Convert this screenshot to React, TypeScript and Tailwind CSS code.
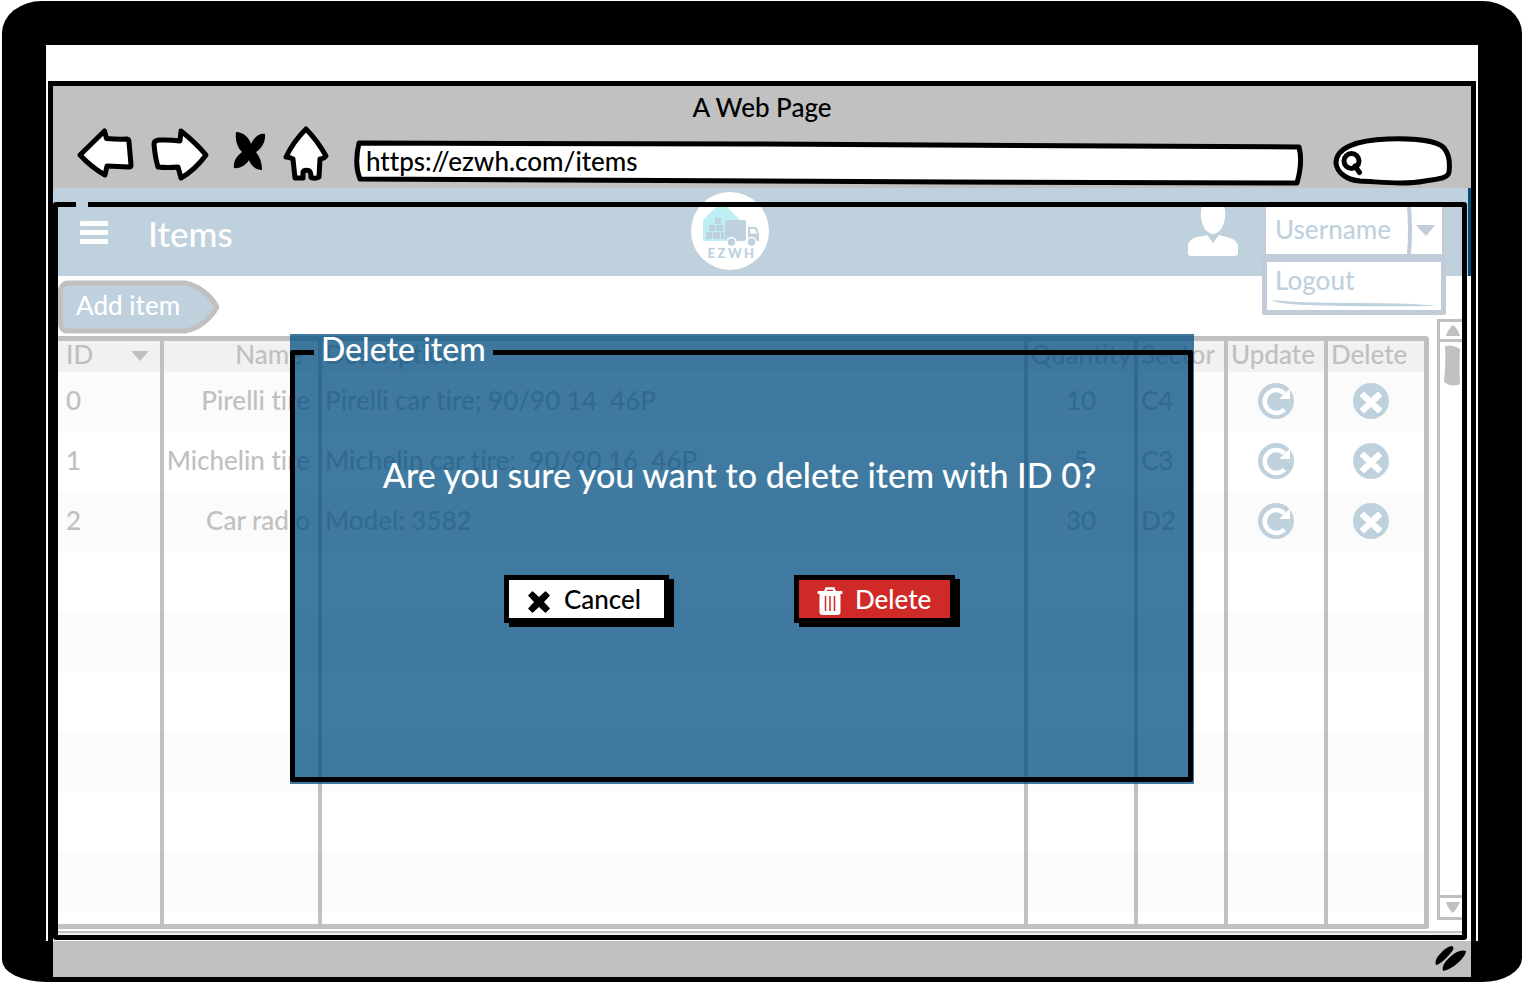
import React from "react";

type Item = {
  id: number;
  name: string;
  description: string;
  quantity: number;
  sector: string;
};

const items: Item[] = [
  { id: 0, name: "Pirelli tire", description: "Pirelli car tire; 90/90 14  46P", quantity: 10, sector: "C4" },
  { id: 1, name: "Michelin tire", description: "Michelin car tire;  90/90 16  46P", quantity: 5, sector: "C3" },
  { id: 2, name: "Car radio", description: "Model: 3582", quantity: 30, sector: "D2" },
];

const emptyRows = [3, 4, 5, 6, 7, 8];

const navStroke = {
  fill: "#fff",
  stroke: "#000",
  strokeWidth: 5,
  strokeLinejoin: "round" as const,
  strokeLinecap: "round" as const,
};

function Toolbar() {
  return (
    <div className="flex h-[60px] items-end gap-[14px] pb-[2px] pl-[23px] pr-[18px]">
      <button aria-label="Back" className="shrink-0">
        <svg width="60" height="58" viewBox="76 128 60 58" className="block overflow-visible">
          <path d="M80 155 L104.500 131 L106.500 138.500 Q118 139.500 127 139 Q129 139.500 129 142 L131 165 Q131 167 129 167 L107 166 L105 175 Q91 167 80 155 Z" {...navStroke} />
        </svg>
      </button>
      <button aria-label="Forward" className="shrink-0">
        <svg width="61" height="58" viewBox="150 128 61 58" className="block overflow-visible">
          <path d="M154 144 Q154 140.500 159 140 Q170 139.500 180 141 L181 131 Q196 143 206 155 Q195 170 181 178 L178 167 Q168 168 158 167 Q155 157 154 144 Z" {...navStroke} />
        </svg>
      </button>
      <button aria-label="Stop" className="shrink-0">
        <svg width="43" height="58" viewBox="225 128 43 58" className="block overflow-visible">
          <path d="M236 132 C243 132 249 137 251 144 C254 137 260 133 265 134 C266 141 262 148 256 152 C260 157 262 163 262 170 C256 170 251 166 249 160 C246 165 240 169 234 168 C233 161 237 156 242 152 C237 147 235 140 236 132 Z" />
        </svg>
      </button>
      <button aria-label="Home" className="shrink-0">
        <svg width="48" height="58" viewBox="282 128 48 58" className="block overflow-visible">
          <path d="M306 129 Q317 140 326 156 Q323 159 320 159 L319 177 Q316 179 311 177.500 Q311 171 308.500 170.500 Q304 169.500 303 172 L303 178 L295 178 Q294 169 293 159 Q289 157 286 157 Q293 142 306 129 Z" {...navStroke} />
        </svg>
      </button>
      <div className="relative ml-[9px] h-[46px] min-w-0 flex-1">
        <svg viewBox="0 0 951 46" preserveAspectRatio="none" className="absolute inset-0 h-full w-full" aria-hidden="true">
          <path d="M6 3 L400 4 L946 7 Q950 22 944 43 L600 42 L7 39 Q1 24 6 3 Z" {...navStroke} vectorEffect="non-scaling-stroke" />
        </svg>
        <input
          aria-label="Address"
          defaultValue="https://ezwh.com/items"
          className="relative block h-[42px] w-full bg-transparent px-[13px] text-[26px] leading-[42px] text-black outline-none"
        />
      </div>
      <div className="relative ml-[14px] h-[50px] w-[121px] shrink-0">
        <svg viewBox="1332 137 121 50" className="absolute inset-0 h-full w-full" aria-hidden="true">
          <path d="M1336 164 C1336 149 1356 141 1388 140 C1416 139 1438 142 1444 149 C1449 155 1450 165 1449 173 C1448 180 1436 180 1425 182 C1404 186 1382 183 1360 182 C1347 181 1337 174 1336 164 Z" {...navStroke} />
          <circle cx="1351.500" cy="162" r="7.500" fill="none" stroke="#000" strokeWidth="5" />
          <path d="M1355 167 L1359.500 173.500" stroke="#000" strokeWidth="5" strokeLinecap="round" />
        </svg>
        <input aria-label="Search" className="relative block h-full w-full bg-transparent pl-[34px] pr-3 text-[20px] outline-none" />
      </div>
    </div>
  );
}

function Logo() {
  return (
    <svg width="78" height="78" viewBox="691 191 78 78" className="mb-[2px] ml-px block" role="img" aria-label="EZWH">
      <circle cx="730" cy="230" r="39" fill="#fff" />
      <path d="M703 240 V219 L719 203 H724 L741 220 V240 Z" fill="#bdeef3" />
      <g fill="#c0d1de">
        <rect x="715" y="217" width="6" height="6" />
        <rect x="709" y="224" width="6" height="6" />
        <rect x="716" y="224" width="7" height="6" rx="1" />
        <rect x="706" y="231" width="6" height="7" />
        <rect x="713" y="231" width="7" height="7" rx="1" />
        <rect x="721" y="231" width="3" height="7" />
        <rect x="725" y="219" width="21" height="21" rx="2" />
        <path d="M748 226 H755 Q757 226 757.500 228 L759 233 V240 H748 Z" />
      </g>
      <path d="M750 228 H755 L757 232.500 H750 Z" fill="#fff" />
      <circle cx="731.500" cy="241" r="4.500" fill="#c0d1de" stroke="#fff" strokeWidth="1.500" />
      <circle cx="751.500" cy="241" r="4.500" fill="#c0d1de" stroke="#fff" strokeWidth="1.500" />
      <text x="707.500 717.500 728 744" y="257" fontSize="13" fontWeight="900" fontFamily="Lato, sans-serif" fill="#c0d1de">
        EZWH
      </text>
    </svg>
  );
}

function Header() {
  return (
    <header className="grid h-[88px] grid-cols-[45%_78px_1fr] items-center border-r-[3px] border-[#004d80] bg-[#c0d1de]">
      <div className="flex items-center gap-[40px] pl-[27px] pt-[2px]">
        <button aria-label="Menu">
          <svg width="28" height="24" viewBox="0 0 28 24" fill="#fff" className="block">
            <rect width="28" height="5" rx="1" />
            <rect y="9" width="28" height="5" rx="1" />
            <rect y="18" width="28" height="5" rx="1" />
          </svg>
        </button>
        <h1 className="text-[35px] leading-[40px] text-white">Items</h1>
      </div>
      <Logo />
      <div className="flex items-center justify-end gap-[25px] pb-[2px] pr-[23px]">
        <svg width="50" height="54" viewBox="1188 204 50 54" fill="#fff" className="block" aria-hidden="true">
          <path d="M1201 210 Q1203 202 1213 202 Q1223 202 1225 210 Q1226 222 1221 229 Q1217 234 1213 234 Q1209 234 1205 229 Q1200 222 1201 210 Z" />
          <path d="M1188 253 V244 Q1190 239 1197 237 Q1204 236 1207 235 L1213 243 L1219 235 Q1223 236 1230 238 Q1236 240 1238 245 V253 Q1238 256 1235 256 H1191 Q1188 256 1188 253 Z" />
        </svg>
        <div className="relative w-[182px]">
          <div className="relative h-[54px] border-[3px] border-b-4 border-[#c2ccd9] bg-white">
            <select
              aria-label="Account"
              className="block h-full w-full appearance-none bg-transparent pl-[9px] pb-[2px] text-[26px] text-[#c0d1de] outline-none"
            >
              <option>Username</option>
            </select>
            <svg viewBox="0 0 40 47" className="pointer-events-none absolute right-0 top-0 h-full w-[40px]" aria-hidden="true">
              <path d="M7 0 Q9 24 7 47" fill="none" stroke="#c2ccd9" strokeWidth="4" />
              <path d="M14 18 H33 L24 29 Z" fill="#c0ccd9" />
            </svg>
          </div>
          <div className="absolute -left-px top-[53px] h-[58px] w-[184px] rounded-[2px] border-[5px] border-[#c2ccd9] bg-white">
            <a href="#logout" className="block pl-[8px] text-[26px] leading-[37px] text-[#c0d1de]">
              Logout
            </a>
            <svg viewBox="0 0 174 8" preserveAspectRatio="none" className="block h-[8px] w-full" aria-hidden="true">
              <path d="M5 1 Q30 4 90 4 Q150 4 169 7 Q90 8 40 6 Q10 5 5 1 Z" fill="#c0d1de" />
            </svg>
          </div>
        </div>
      </div>
    </header>
  );
}

function UpdateIcon() {
  return (
    <svg width="36" height="36" viewBox="0 0 36 36" className="block" aria-hidden="true">
      <circle cx="18" cy="18" r="18" fill="#c0d1de" />
      <path d="M26.500 26.500 A11.500 11.500 0 1 1 26.500 10.500" fill="none" stroke="#fff" strokeWidth="4.500" />
      <path d="M32 5.500 V16 H21 Z" fill="#fff" />
    </svg>
  );
}

function CrossIcon() {
  return (
    <svg width="36" height="36" viewBox="0 0 36 36" className="block" aria-hidden="true">
      <circle cx="18" cy="18" r="18" fill="#c0d1de" />
      <path
        d="M11 9 L18 15.500 L25 9 L29 13 L22 19.500 L29 26 L25 30 L18 23.500 L11 30 L7 26 L14 19.500 L7 13 Z"
        fill="#fff"
        stroke="#fff"
        strokeLinejoin="round"
      />
    </svg>
  );
}

function ItemsTable() {
  const line = "border-r-4 border-[#c0c0c0] p-0";
  return (
    <table className="w-full table-fixed border-separate border-spacing-0 rounded-r-[4px] border-y-[5px] border-r-[5px] border-[#c0c0c0] text-[26px] leading-[30px] text-[#c0c0c0]">
      <colgroup>
        <col className="w-[107px]" />
        <col className="w-[158px]" />
        <col />
        <col className="w-[110px]" />
        <col className="w-[90px]" />
        <col className="w-[100px]" />
        <col className="w-[96px]" />
      </colgroup>
      <thead className="bg-[#f1f1f1] text-left">
        <tr className="h-[31px]">
          <th className={line + " font-medium"}>
            <button className="flex h-[31px] w-full items-start justify-between pl-[9px] pr-[11px] leading-[26px]">
              ID
              <svg width="18" height="10" viewBox="0 0 18 10" className="mt-[10px] block" aria-hidden="true">
                <path d="M0 0 H18 L9 10 Z" fill="#c0c0c0" />
              </svg>
            </button>
          </th>
          <th className={line + " font-medium"}>
            <div className="h-[31px] pr-[15px] text-right leading-[26px]">Name</div>
          </th>
          <th className={line + " font-medium"}>
            <div className="h-[31px] pl-[3px] leading-[26px]">Description</div>
          </th>
          <th className={line + " font-medium"}>
            <div className="h-[31px] text-center leading-[26px]">Quantity</div>
          </th>
          <th className={line + " font-medium"}>
            <div className="h-[31px] pl-[3px] leading-[26px]">Sector</div>
          </th>
          <th className={line + " font-medium"}>
            <div className="h-[31px] pl-[3px] leading-[26px]">Update</div>
          </th>
          <th className="p-0 font-medium">
            <div className="h-[31px] pl-[3px] leading-[26px]">Delete</div>
          </th>
        </tr>
      </thead>
      <tbody>
        {items.map((item) => (
          <tr key={item.id} className="h-[60px] odd:bg-[#fbfbfb]">
            <td className={line}>
              <div className="pb-1 pl-[9px]">{item.id}</div>
            </td>
            <td className={line}>
              <div className="whitespace-nowrap pb-1 pr-[8px] text-right">{item.name}</div>
            </td>
            <td className={line}>
              <div className="whitespace-pre pb-1 pl-[3px]">{item.description}</div>
            </td>
            <td className={line}>
              <div className="pb-1 text-center">{item.quantity}</div>
            </td>
            <td className={line}>
              <div className="pb-1 pl-[3px]">{item.sector}</div>
            </td>
            <td className={line}>
              <button aria-label={"Update item " + item.id} className="mx-auto mb-[2px] block">
                <UpdateIcon />
              </button>
            </td>
            <td className="p-0">
              <button aria-label={"Delete item " + item.id} className="mb-[2px] ml-[25px] block">
                <CrossIcon />
              </button>
            </td>
          </tr>
        ))}
        {emptyRows.map((n) => (
          <tr key={n} className="h-[60px] odd:bg-[#fbfbfb]">
            <td className={line} />
            <td className={line} />
            <td className={line} />
            <td className={line} />
            <td className={line} />
            <td className={line} />
            <td className="p-0" />
          </tr>
        ))}
        <tr className="h-[12px]">
          <td className={line} />
          <td className={line} />
          <td className={line} />
          <td className={line} />
          <td className={line} />
          <td className={line} />
          <td className="p-0" />
        </tr>
      </tbody>
    </table>
  );
}

function ScrollBar() {
  return (
    <div className="flex w-[27px] shrink-0 flex-col border-y-[3px] border-l-[3px] border-[#c0c0c0] bg-white">
      <button aria-label="Scroll up" className="flex h-[20px] items-center justify-center border-b-[3px] border-[#c0c0c0] pl-[2px]">
        <svg width="14" height="11" viewBox="0 0 14 11" className="block">
          <path d="M0 11 Q2 4 7 0 Q12 4 14 11 Z" fill="#c0c0c0" />
        </svg>
      </button>
      <div className="flex-1 px-[4px] pt-[3px]">
        <svg width="17" height="41" viewBox="0 0 17 41" className="block" aria-hidden="true">
          <path d="M1 1 Q8 -1 16 4 Q15 20 16 39 Q8 43 0 37 Q2 18 1 1 Z" fill="#c0c0c0" />
        </svg>
      </div>
      <button aria-label="Scroll down" className="flex h-[22px] items-center justify-center border-t-[3px] border-[#c0c0c0] pl-[2px]">
        <svg width="14" height="11" viewBox="0 0 14 11" className="block">
          <path d="M0 0 H14 Q11 7 7 11 Q2 7 0 0 Z" fill="#c0c0c0" />
        </svg>
      </button>
    </div>
  );
}

function DeleteDialog() {
  return (
    <div className="absolute inset-x-0 top-[146px] flex justify-center pr-[40px]">
      <div role="dialog" aria-label="Delete item" className="h-[450px] w-[904px] bg-[#004d80]/75 pb-[2px] pr-px">
        <fieldset className="h-full rounded-[2px] border-[5px] border-black">
          <legend className="ml-[19px] px-[7px] pb-[8px] text-[32px] leading-[29px] text-white">Delete item</legend>
          <p className="-ml-[4px] mt-[85px] text-center text-[34px] leading-[38px] text-white">
            Are you sure you want to delete item with ID 0?
          </p>
          <div className="mt-[81px] flex gap-[125px] pl-[209px]">
            <button className="flex h-[48px] w-[165px] items-center gap-[14px] border-[5px] border-black bg-white pl-[19px] text-[26px] text-black shadow-[5px_4px_0_#000]">
              <svg width="22" height="22" viewBox="0 0 22 22" className="mt-[5px] block" aria-hidden="true">
                <path
                  d="M4.500 1 L11 7 L17.500 1 L21 4.500 L15 11 L21 17.500 L17.500 21 L11 15 L4.500 21 L1 17.500 L7 11 L1 4.500 Z"
                  stroke="#000"
                  strokeWidth="1.500"
                  strokeLinejoin="round"
                />
              </svg>
              <span>Cancel</span>
            </button>
            <button className="flex h-[48px] w-[161px] items-center gap-[12px] border-[5px] border-black bg-[#cf2a27] pl-[18px] text-[26px] text-white shadow-[5px_4px_0_#000]">
              <svg width="26" height="28" viewBox="0 0 26 28" className="mt-[4px] block" aria-hidden="true">
                <path d="M8 5 L9.500 1.500 H16.500 L18 5" fill="none" stroke="#fff" strokeWidth="2.500" />
                <rect x="0.500" y="4" width="25" height="3" rx="1" fill="#fff" />
                <path d="M2.500 6 H23.500 V25 Q23.500 28 20.500 28 H5.500 Q2.500 28 2.500 25 Z" fill="#fff" />
                <path d="M8.500 9 V24 M13 9 V24 M17.500 9 V24" stroke="#cf2a27" strokeWidth="1.500" />
              </svg>
              <span>Delete</span>
            </button>
          </div>
        </fieldset>
      </div>
    </div>
  );
}

export default function App() {
  return (
    <div className="min-h-screen bg-white px-[2px] pb-[2px] pt-px font-['Lato','Open_Sans',sans-serif] font-medium [font-variant-ligatures:none]">
      <div className="rounded-[40px_40px_40px_44px/32px_32px_24px_22px] bg-black px-[44px] pb-px pt-[44px]">
        <div className="bg-white px-[2px] pt-[36px]">
          <div className="border-x-[5px] border-t-[5px] border-black bg-[#c1c1c1]">
            <div className="h-[42px] text-center text-[26px] leading-[42px] text-black">A Web Page</div>
            <Toolbar />
            <main className="relative bg-white">
              <Header />
              <div className="flex gap-[8px] pb-[12px] pl-[4px] pr-[7px]">
                <div className="min-w-0 flex-1 pt-[4px]">
                  <button className="relative mb-[2px] block h-[54px] w-[162px]">
                    <svg viewBox="0 0 162 54" className="absolute inset-0 h-full w-full" aria-hidden="true">
                      <path
                        d="M11 3 H128 C142 5 155 17 160 27 C155 37 142 49 128 51 H10 C5 51 3 46 3 40 V14 C3 7 6 3 11 3 Z"
                        fill="#c0d1de"
                        stroke="#c0c0c0"
                        strokeWidth="5"
                      />
                    </svg>
                    <span className="relative block pb-[4px] pl-[19px] text-left text-[26px] leading-[50px] text-white">Add item</span>
                  </button>
                  <ItemsTable />
                </div>
                <div className="flex pb-[9px] pt-[43px]">
                  <ScrollBar />
                </div>
              </div>
              <div className="pointer-events-none absolute inset-x-0 bottom-[6px] mx-[4px] h-[4px] border-t-2 border-[#c0c0c0] bg-[#eeeeee]" />
              <div className="pointer-events-none absolute bottom-px left-0 right-[4px] top-[14px] rounded-[3px] border-[5px] border-black">
                <div className="absolute -top-[5px] left-[18px] h-[5px] w-[12px] bg-[#c0d1de]" />
              </div>
              <DeleteDialog />
            </main>
          </div>
        </div>
        <footer className="mx-[2px] flex h-[40px] items-center justify-end border-x-[5px] border-b-4 border-black bg-[#c1c1c1] pr-[4px]">
          <svg width="32" height="26" viewBox="0 0 32 26" className="block" aria-hidden="true">
            <path d="M1 19 Q-1 14 5 8 Q12 0 17 0 Q21 2 14 9 Q8 16 2 19 Z" />
            <path d="M8 25 Q6 19 15 11 Q24 3 31 5 Q31 9 24 16 Q15 24 8 25 Z" />
          </svg>
        </footer>
      </div>
    </div>
  );
}
